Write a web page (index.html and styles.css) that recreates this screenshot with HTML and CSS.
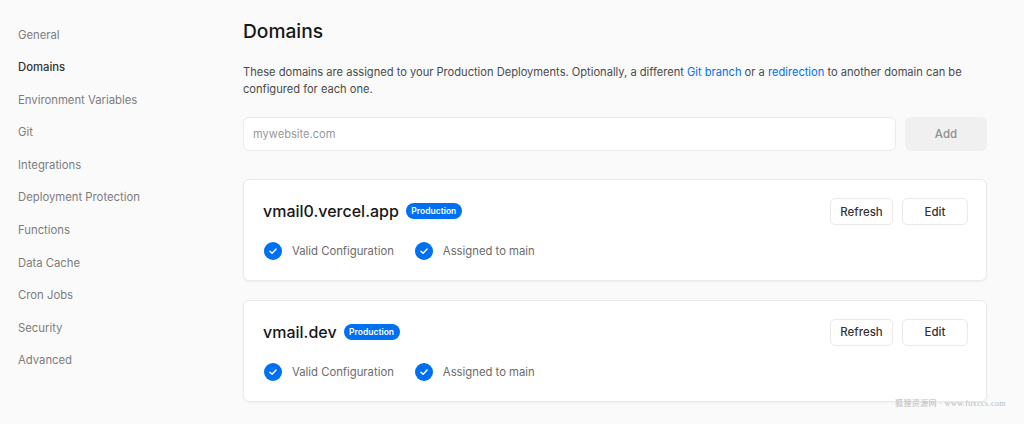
FILE: index.html
```html
<!DOCTYPE html>
<html lang="en">
<head>
  <meta charset="UTF-8" />
  <title>Domains</title>
  <link rel="stylesheet" href="styles.css">
</head>
<body>
  <div class="page">
    <nav class="sidebar">
      <a class="nav-item">General</a>
      <a class="nav-item active">Domains</a>
      <a class="nav-item">Environment Variables</a>
      <a class="nav-item">Git</a>
      <a class="nav-item">Integrations</a>
      <a class="nav-item">Deployment Protection</a>
      <a class="nav-item">Functions</a>
      <a class="nav-item">Data Cache</a>
      <a class="nav-item">Cron Jobs</a>
      <a class="nav-item">Security</a>
      <a class="nav-item">Advanced</a>
    </nav>

    <main class="content">
      <h1 class="title">Domains</h1>
      <p class="intro">These domains are assigned to your Production Deployments. Optionally, a different <a class="link">Git branch</a> or a <a class="link">redirection</a> to another domain can be configured for each one.</p>

      <div class="add-row">
        <input class="domain-input" type="text" placeholder="mywebsite.com" />
        <button class="add-btn">Add</button>
      </div>

      <section class="card">
        <div class="card-info">
          <div class="card-head">
            <span class="domain">vmail0.vercel.app</span>
            <span class="badge">Production</span>
          </div>
          <div class="checks">
            <span class="check">
              <svg class="check-icon" viewBox="0 0 18 18"><circle cx="9" cy="9" r="9" fill="#0070f3"/><path d="M5.9 9.2l2.2 2.1 4-4.3" fill="none" stroke="#fff" stroke-width="1.4" stroke-linecap="round" stroke-linejoin="round"/></svg>
              Valid Configuration
            </span>
            <span class="check">
              <svg class="check-icon" viewBox="0 0 18 18"><circle cx="9" cy="9" r="9" fill="#0070f3"/><path d="M5.9 9.2l2.2 2.1 4-4.3" fill="none" stroke="#fff" stroke-width="1.4" stroke-linecap="round" stroke-linejoin="round"/></svg>
              Assigned to main
            </span>
          </div>
        </div>
        <div class="card-actions">
          <button class="btn refresh">Refresh</button>
          <button class="btn edit">Edit</button>
        </div>
      </section>

      <section class="card">
        <div class="card-info">
          <div class="card-head">
            <span class="domain">vmail.dev</span>
            <span class="badge">Production</span>
          </div>
          <div class="checks">
            <span class="check">
              <svg class="check-icon" viewBox="0 0 18 18"><circle cx="9" cy="9" r="9" fill="#0070f3"/><path d="M5.9 9.2l2.2 2.1 4-4.3" fill="none" stroke="#fff" stroke-width="1.4" stroke-linecap="round" stroke-linejoin="round"/></svg>
              Valid Configuration
            </span>
            <span class="check">
              <svg class="check-icon" viewBox="0 0 18 18"><circle cx="9" cy="9" r="9" fill="#0070f3"/><path d="M5.9 9.2l2.2 2.1 4-4.3" fill="none" stroke="#fff" stroke-width="1.4" stroke-linecap="round" stroke-linejoin="round"/></svg>
              Assigned to main
            </span>
          </div>
        </div>
        <div class="card-actions">
          <button class="btn refresh">Refresh</button>
          <button class="btn edit">Edit</button>
        </div>
      </section>
    </main>
  </div>

  <div class="watermark">狐狸资源网 · www.foxccs.com</div>
</body>
</html>
```

FILE: styles.css
```css
html,
body {
  height: 100%;
}

body {
  margin: 0;
  background: #fafafa;
  color: #171717;
  font-family: Inter, "Noto Sans CJK SC", sans-serif;
  overflow: hidden;
}

.page {
  display: flex;
  height: 424px;
  overflow: hidden;
}

.sidebar {
  display: flex;
  flex-direction: column;
  width: 243px;
  flex-shrink: 0;
  padding: 18.5px 0 0 18px;
  box-sizing: border-box;
}

.nav-item {
  height: 32.6px;
  line-height: 32.6px;
  font-size: 11.3px;
  color: #7d7d7d;
}

.nav-item.active {
  color: #333;
  font-weight: 500;
}

.content {
  width: 744px;
  flex-shrink: 0;
  padding-top: 19px;
}

.title {
  margin: 0;
  font-size: 19.2px;
  line-height: 24px;
  font-weight: 500;
  color: #171717;
}

.intro {
  margin: 21px 0 0;
  font-size: 11.12px;
  line-height: 17px;
  color: #4a4a4a;
}

.link {
  color: #0070f3;
}

.add-row {
  display: flex;
  gap: 9px;
  margin-top: 19px;
}

.domain-input {
  flex: 1;
  height: 34px;
  box-sizing: border-box;
  padding: 0 9px;
  border: 1px solid #eaeaea;
  border-radius: 6px;
  background: #fff;
  font-family: inherit;
  font-size: 11.1px;
  outline: none;
}

.domain-input::placeholder {
  color: #999;
}

.add-btn {
  width: 82px;
  height: 34px;
  border: none;
  border-radius: 6px;
  background: #f0f0f0;
  color: #8f8f8f;
  font-family: inherit;
  font-size: 11.5px;
  font-weight: 500;
}

.card {
  display: flex;
  justify-content: space-between;
  box-sizing: border-box;
  height: 102px;
  margin-top: 28px;
  padding: 18px 18px 0 19px;
  border: 1px solid #eaeaea;
  border-radius: 6px;
  background: #fff;
  box-shadow: 0 1px 2px rgba(0, 0, 0, 0.05);
}

.card + .card {
  margin-top: 18.5px;
}

.card-head {
  display: flex;
  align-items: center;
  gap: 7px;
  height: 26px;
}

.domain {
  font-size: 16px;
  font-weight: 500;
  color: #171717;
}

.badge {
  padding: 0 5.5px;
  height: 16px;
  line-height: 16px;
  border-radius: 8px;
  background: #0070f3;
  color: #fff;
  font-size: 8.5px;
  font-weight: 600;
}

.checks {
  display: flex;
  gap: 21px;
  margin: 18px 0 0 1px;
}

.check {
  display: flex;
  align-items: center;
  gap: 10px;
  font-size: 11.3px;
  line-height: 18px;
  color: #6b6b6b;
}

.check-icon {
  width: 18px;
  height: 18px;
}

.card-actions {
  display: flex;
  gap: 9px;
}

.btn {
  height: 27px;
  box-sizing: border-box;
  border: 1px solid #eaeaea;
  border-radius: 5px;
  background: #fff;
  color: #333;
  font-family: inherit;
  font-size: 11.5px;
  font-weight: 500;
  padding: 0;
}

.refresh {
  width: 63px;
}

.edit {
  width: 66px;
}

.watermark {
  position: absolute;
  left: 895px;
  top: 398px;
  font-size: 8px;
  line-height: 12px;
  letter-spacing: 0.4px;
  color: #bbb;
  font-family: "Liberation Serif", "Noto Sans CJK SC", serif;
  white-space: nowrap;
}
```
